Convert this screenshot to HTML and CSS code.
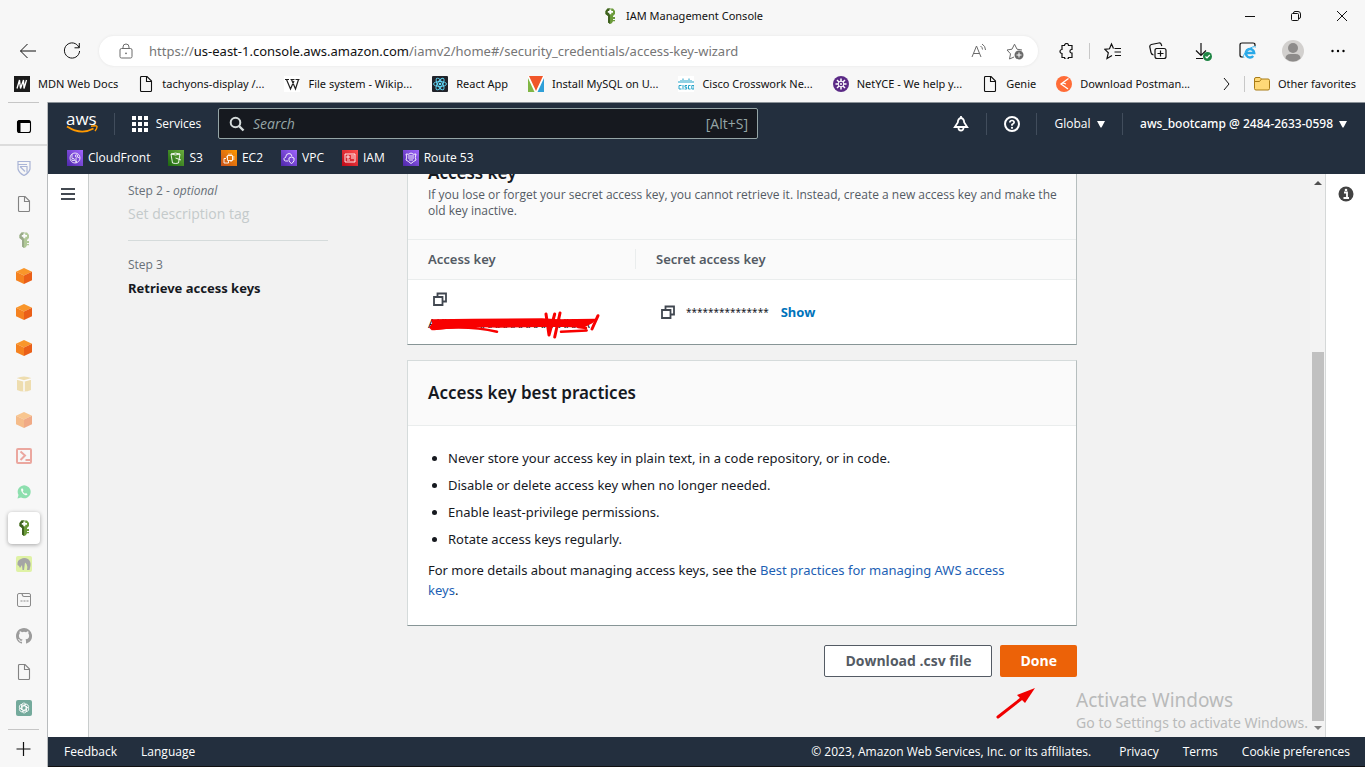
FILE: index.html
```html
<!DOCTYPE html>
<html lang="en">
<head>
<meta charset="utf-8">
<title>IAM Management Console</title>
<link rel="stylesheet" href="styles.css">
</head>
<body>
<svg class="defs" aria-hidden="true">
  <defs>
    <linearGradient id="purple" x1="0" y1="1" x2="1" y2="0"><stop offset="0" stop-color="#4d27a8"/><stop offset="1" stop-color="#a166ff"/></linearGradient>
    <linearGradient id="green" x1="0" y1="1" x2="1" y2="0"><stop offset="0" stop-color="#1b660f"/><stop offset="1" stop-color="#6cae3e"/></linearGradient>
    <linearGradient id="orange" x1="0" y1="1" x2="1" y2="0"><stop offset="0" stop-color="#c8511b"/><stop offset="1" stop-color="#ff9900"/></linearGradient>
    <linearGradient id="red" x1="0" y1="1" x2="1" y2="0"><stop offset="0" stop-color="#bd0816"/><stop offset="1" stop-color="#ff5252"/></linearGradient>
    <symbol id="page" viewBox="0 0 16 16"><path d="M3.500.5h5.500l4.500 4.500v9.500q0 1-1 1h-9q-1 0-1-1v-13q0-1 1-1zM8.500.8v4.700h4.700" fill="none" stroke="currentColor" stroke-width="1.100"/></symbol>
    <symbol id="key" viewBox="0 0 16 16"><path d="M3.500 3l2-2.500h5.500l2 2.500v3l-2 2v1h2v2h-2v1h2v1.200h-2L10 15l-1.500 1L6 14.500V8L3.500 6z" fill="#6b9a3a"/><path d="M3.500 3l2-2.500H8V16l-2-1.500V8L3.500 6z" fill="#3f611f"/><path d="M7.300 1.500h2V3H11v1.800H9.300V6.300h-2V4.800H5.800V3h1.500z" fill="#fff"/></symbol>
    <symbol id="cube" viewBox="0 0 16 16"><path d="M8 0l8 3.700L8 7.500 0 3.700z" fill="#f9962a"/><path d="M0 3.700l8 3.800V16l-8-3.800z" fill="#f58220"/><path d="M16 3.700L8 7.500V16l8-3.800z" fill="#ea5f18"/></symbol>
    <symbol id="copy" viewBox="0 0 16 16"><path d="M2 6h8.500v8H2zM5.500 6V2.500H14V10.500h-3.500" fill="none" stroke="#414750" stroke-width="1.800"/></symbol>
    <symbol id="caret" viewBox="0 0 8 8"><path d="M0 1h8L4.500 7.500h-1z" fill="currentColor"/></symbol>
  </defs>
</svg>

<header class="titlebar">
  <div class="window-title"><svg class="i16"><use href="#key"/></svg><span>IAM Management Console</span></div>
  <div class="window-controls">
    <button aria-label="Minimize"><svg class="i12" viewBox="0 0 12 12"><path d="M1 6.500h10" class="line"/></svg></button>
    <button aria-label="Restore"><svg class="i12" viewBox="0 0 12 12"><path d="M2.500 3.500h5q1 0 1 1v5q0 1-1 1h-5q-1 0-1-1v-5q0-1 1-1zM3.500 3q0-1.500 1.500-1.500h3q2.500 0 2.500 2.500v3q0 1.500-1.500 1.500" class="line"/></svg></button>
    <button aria-label="Close"><svg class="i12" viewBox="0 0 12 12"><path d="M1 1l10 10M11 1L1 11" class="line"/></svg></button>
  </div>
</header>

<div class="toolbar">
  <button class="tool nav-tool" aria-label="Back"><svg class="i18" viewBox="0 0 18 18"><path d="M17 9H1.500M8.500 2l-7 7 7 7" class="line"/></svg></button>
  <button class="tool nav-tool" aria-label="Refresh"><svg class="i18" viewBox="0 0 18 18"><path d="M16 5.500A7.600 7.600 0 1 0 16.600 9M16.300 1v4.800h-4.800" class="line"/></svg></button>
  <div class="address">
    <svg class="i16 muted" viewBox="0 0 16 16"><path d="M3.500 5.500h9q1.500 0 1.500 1.500v6.500q0 1.500-1.500 1.500h-9Q2 15 2 13.500V7q0-1.500 1.500-1.500zM5 5.500V4a3 3 0 0 1 6 0v1.500" class="line"/><circle cx="8" cy="10.300" r=".9" fill="currentColor"/></svg>
    <div class="url" role="textbox" aria-label="Address">https://<b>us-east-1.console.aws.amazon.com</b>/iamv2/home#/security_credentials/access-key-wizard</div>
    <button aria-label="Read aloud"><svg class="i16 muted" viewBox="0 0 16 16"><path d="M1 14L5.500 3 10 14M2.600 10.500h5.800M9.500 3q2 1.300 2 3.500M11 1q3.500 2 3.500 6" class="line"/></svg></button>
    <button aria-label="Add to favorites"><svg class="i18 muted" viewBox="0 0 18 18"><path d="M8 15l-4.500 2 1-5.200L1 8l5-.8 2.500-5L11 7.200l5 .8" class="line"/><circle cx="13" cy="13" r="4.500" fill="currentColor"/><path d="M13 10.500v5M10.500 13h5" stroke="#fff"/></svg></button>
  </div>
  <div class="tools">
    <button class="tool" aria-label="Extensions"><svg class="i16" viewBox="0 0 16 16"><path d="M3 2.500h2.500a2 2 0 0 1 4 0H13v4h-.7a1.800 1.800 0 0 0 0 3.500H13v4.500H9.500a2 2 0 0 1-4 0H3V10.500a2 2 0 0 1 0-4z" class="line heavy"/></svg></button>
    <span class="tool-rule"></span>
    <button class="tool" aria-label="Favorites"><svg class="i18" viewBox="0 0 18 18"><path d="M9.500 6.500L7.500 2 5.500 6.800.8 7.300l3.500 3.500L3 16.500l5-3M10.500 6.500H17M10.500 10H17M11 13.500h6" class="line heavy"/></svg></button>
    <button class="tool" aria-label="Collections"><svg class="i18" viewBox="0 0 18 18"><path d="M7 6.500h8q2 0 2 2v6q0 2-2 2H8q-2 0-2-2v-6q0-2 2-2M11.500 8.500v6M8.500 11.500h6M4.500 13Q2.500 12.500 2 10.500L.8 5q-.3-2 1.500-2.500l7.500-1.500q2-.3 2.500 1.500l.5 1.500" class="line heavy"/></svg></button>
    <button class="tool" aria-label="Downloads"><svg class="i20" viewBox="0 0 20 20"><path d="M8 2v12M3 9.500L8 14.500l5-5M3 17.500h7" class="line heavy"/><circle cx="14.500" cy="15.500" r="4.500" fill="#1e8544"/><path d="M12.500 15.500l1.500 1.500 2.800-3" fill="none" stroke="#fff" stroke-width="1.200"/></svg></button>
    <button class="tool" aria-label="Internet Explorer mode"><svg class="i18" viewBox="0 0 18 18"><path d="M16 4V3q0-2-2-2H3Q1 1 1 3v10q0 2 2 2h1" class="line heavy"/><path d="M6.500 11h8.700a4.200 4.200 0 1 0-1 3" fill="none" stroke="#29a9e8" stroke-width="2.500"/><path d="M5 16q-2-2 3-7.500 6-5 9-3.500" fill="none" stroke="#3bb4ee" stroke-width="1"/></svg></button>
    <button class="tool" aria-label="Profile"><svg class="i22" viewBox="0 0 22 22"><circle cx="11" cy="11" r="11" fill="#d2d0ce"/><circle cx="11" cy="8" r="5" fill="#8d8b8a"/><path d="M3.500 18.500q0-4.500 5-4.500h5q5 0 5 4.500a11 11 0 0 1-15 0z" fill="#8d8b8a"/></svg></button>
    <button class="tool" aria-label="Settings and more"><svg class="i16" viewBox="0 0 16 16"><circle cx="2.500" cy="8" r="1.200"/><circle cx="8" cy="8" r="1.200"/><circle cx="13.500" cy="8" r="1.200"/></svg></button>
  </div>
</div>

<nav class="bookmarks" aria-label="Favorites">
  <a href="#"><svg class="i16" viewBox="0 0 16 16"><path d="M0 0h16v16H0z" fill="#1b1b1b"/><path d="M3 12.500L5.500 4l1 8.500L9.500 4l.5 8.500L12.500 4" fill="none" stroke="#fff" stroke-width="1.300"/></svg>MDN Web Docs</a>
  <a href="#"><svg class="i16"><use href="#page"/></svg>tachyons-display /...</a>
  <a href="#"><svg class="i16" viewBox="0 0 16 16"><path d="M0 0h16v16H0z" fill="#fff"/><path d="M1 3.500h4M6.500 3.500h4M11.500 3.500h4M2.500 3.500l4 9.500L10 5M7.500 3.500l4 9.500 3-9.500" fill="none" stroke="#222" stroke-width="1.200"/></svg>File system - Wikip...</a>
  <a href="#"><svg class="i16" viewBox="0 0 16 16"><rect width="16" height="16" rx="1" fill="#20232a"/><g fill="none" stroke="#61dafb" stroke-width=".9"><ellipse cx="8" cy="8" rx="6.500" ry="2.500"/><ellipse cx="8" cy="8" rx="6.500" ry="2.500" transform="rotate(60 8 8)"/><ellipse cx="8" cy="8" rx="6.500" ry="2.500" transform="rotate(120 8 8)"/></g><circle cx="8" cy="8" r="1.300" fill="#61dafb"/></svg>React App</a>
  <a href="#"><svg class="i16" viewBox="0 0 16 16"><path d="M0 0h16v16H0z" fill="#fff"/><path d="M1 0h14L8 15z" fill="#f1562a"/><path d="M0 2l6.500 14H0z" fill="#80b644"/><path d="M16 2L9.500 16H16z" fill="#2f9fd8"/></svg>Install MySQL on U...</a>
  <a href="#"><svg class="i16" viewBox="0 0 16 16"><path d="M0 0h16v16H0z" fill="#fff"/><path d="M1 5v2M3 4v3M5 2.500V7M7 4v3M9 4v3M11 2.500V7M13 4v3M15 5v2M3.500 9.500H1v3.500h2.500M5 9v4.500M9 9.500H7v1.700h1.700V13H6.500M12.500 9.500h-2V13h2M13.800 9.500H16V13h-2.200z" fill="none" stroke="#25a3c8"/></svg>Cisco Crosswork Ne...</a>
  <a href="#"><svg class="i16" viewBox="0 0 16 16"><circle cx="8" cy="8" r="8" fill="#5b2a86"/><path d="M8 2.500v11M2.500 8h11M4 4l8 8M12 4l-8 8" stroke="#fff" stroke-width="1.500"/><circle cx="8" cy="8" r="2.800" fill="#5b2a86" stroke="#fff"/><circle cx="8" cy="8" r="1" fill="#fff"/></svg>NetYCE - We help y...</a>
  <a href="#"><svg class="i16"><use href="#page"/></svg>Genie</a>
  <a href="#"><svg class="i16" viewBox="0 0 16 16"><circle cx="8" cy="8" r="8" fill="#ff6c37"/><path d="M12.500 2.500L5 8l7 5M5 8l2-1 3 1" fill="none" stroke="#fff" stroke-width="1.300"/></svg>Download Postman...</a>
  <div class="bookmarks-end">
    <button aria-label="More favorites"><svg class="i12" viewBox="0 0 12 12"><path d="M4 0l5 6-5 6" class="line"/></svg></button>
    <a href="#"><svg class="i16" viewBox="0 0 16 16"><path d="M.5 4V3q0-1.500 1.500-1.500h4L7.500 3H14q1.500 0 1.500 1.500v8q0 1.500-1.500 1.500H2Q.5 14 .5 12.500z" fill="#ffd977" stroke="#a97c17"/><path d="M.5 5.500h5L7.500 3" fill="none" stroke="#a97c17"/></svg>Other favorites</a>
  </div>
</nav>

<div class="workspace">
  <aside class="tabs" aria-label="Browser tabs">
    <button class="tab-menu" aria-label="Tab actions menu"><svg class="i16" viewBox="0 0 16 16"><rect x="1.500" y="2.500" width="13" height="12" rx="2" fill="none" stroke="#000" stroke-width="1.100"/><path d="M2 2.500h12V5H2zM1.500 3h3v11.500H3L1.500 13z"/></svg></button>
    <div class="tab-list">
      <button class="dim" aria-label="Shield"><svg class="i16" viewBox="0 0 16 16"><path d="M2 1.500h12V9q-1 4-6 6.500Q3 13 2 9zM2 4.500h9M4 6.500h7v6M4 6.500l5 5" fill="none" stroke="#5f75b8" stroke-width="1.200"/></svg></button>
      <button class="dim" aria-label="Document"><svg class="i16"><use href="#page"/></svg></button>
      <button class="dim" aria-label="IAM"><svg class="i16"><use href="#key"/></svg></button>
      <button aria-label="AWS console"><svg class="i16"><use href="#cube"/></svg></button>
      <button aria-label="AWS console"><svg class="i16"><use href="#cube"/></svg></button>
      <button aria-label="AWS console"><svg class="i16"><use href="#cube"/></svg></button>
      <button class="dim" aria-label="Package"><svg class="i16" viewBox="0 0 16 16"><path d="M1 2q7-3 14 0v12q-7 3-14 0z" fill="#e6c46a"/><path d="M1 3l7 2 7-2M8 5v10.500" fill="none" stroke="#fff" stroke-width="1.500"/></svg></button>
      <button class="dim" aria-label="AWS console"><svg class="i16"><use href="#cube"/></svg></button>
      <button class="dim" aria-label="Terminal"><svg class="i16" viewBox="0 0 16 16"><rect x="1" y="1" width="14" height="14" rx="1" fill="none" stroke="#e0594a" stroke-width="2"/><path d="M4.500 3.500L9 7.500 4.500 12M9.500 12H14" fill="none" stroke="#e0594a" stroke-width="2"/></svg></button>
      <button class="dim" aria-label="WhatsApp"><svg class="i16" viewBox="0 0 16 16"><path d="M1.500 14.500l1-3.500a6.500 6.500 0 1 1 2.500 2.500z" fill="#25c867"/><path d="M5.500 4.500q-1 1 0 3 1.500 3 4 3.700 1.500.3 2-1L10 9l-1 .8Q7.500 9 6.700 7.200l.8-.9L6.700 4.500z" fill="#fff"/></svg></button>
      <button class="current" aria-label="IAM Management Console"><svg class="i16"><use href="#key"/></svg></button>
      <button class="dim" aria-label="Elephant"><svg class="i16" viewBox="0 0 16 16"><rect width="16" height="16" rx="2" fill="#c8ee56"/><path d="M1.500 9Q1 4 5 3q3-2 7 0 3 2 2.500 6.500L13.500 14h-2.500q1-3-.5-6L9 6.500 8 14H6.500L6 9l-2 3-1-2z" fill="#555"/></svg></button>
      <button class="dim" aria-label="Web app"><svg class="i16" viewBox="0 0 16 16"><rect x="1.500" y="1.500" width="13" height="13" rx="1.500" fill="none" stroke="#222"/><path d="M6 1.500q.5 3 2 3h6.500M4.500 9h2M7.500 9h2M10.500 9h2" fill="none" stroke="#222" stroke-width="1.200"/></svg></button>
      <button class="dim" aria-label="GitHub"><svg class="i16" viewBox="0 0 16 16"><path fill="#444" d="M8 0C3.580 0 0 3.580 0 8c0 3.540 2.290 6.530 5.470 7.590.4.070.55-.17.55-.38v-1.490c-2.010.37-2.530-.49-2.690-.94-.09-.23-.48-.94-.82-1.130-.28-.15-.68-.52-.01-.53.63-.01 1.080.58 1.230.82.72 1.210 1.870.87 2.330.66.07-.52.28-.87.51-1.070-1.780-.2-3.640-.89-3.640-3.950 0-.87.31-1.590.82-2.150-.08-.2-.36-1.020.08-2.120 0 0 .67-.21 2.200.82a7.600 7.600 0 0 1 4 0c1.530-1.040 2.200-.82 2.200-.82.44 1.100.16 1.920.08 2.120.51.56.82 1.270.82 2.150 0 3.070-1.870 3.750-3.650 3.950.29.25.54.73.54 1.480v2.200c0 .21.150.46.550.38A8 8 0 0 0 8 0z"/></svg></button>
      <button class="dim" aria-label="Document"><svg class="i16"><use href="#page"/></svg></button>
      <button aria-label="Chat"><svg class="i16" viewBox="0 0 16 16"><rect width="16" height="16" rx="2" fill="#74aa9c"/><g fill="none" stroke="#fff" stroke-width=".8"><path id="petal" d="M5.500 10V5.500a2.400 2.400 0 0 1 4.600-1L6.500 6.700"/><use href="#petal" transform="rotate(60 8 8)"/><use href="#petal" transform="rotate(120 8 8)"/><use href="#petal" transform="rotate(180 8 8)"/><use href="#petal" transform="rotate(240 8 8)"/><use href="#petal" transform="rotate(300 8 8)"/></g></svg></button>
    </div>
    <button class="new-tab" aria-label="New tab"><svg class="i16" viewBox="0 0 16 16"><path d="M7.500 2v14M.5 9h14" class="line heavy"/></svg></button>
  </aside>

  <div class="console">
    <header class="aws-header">
      <div class="aws-bar">
        <a class="aws-logo" href="#" aria-label="AWS"><span>aws</span><svg viewBox="0 0 32 9"><path d="M1 1.500q14 9 26.500 2" fill="none" stroke="#f90" stroke-width="1.800"/><path d="M25 1.200q5.500-1 6 .2.300 1.800-2 4.600" fill="none" stroke="#f90" stroke-width="1.400"/></svg></a>
        <button class="services"><svg class="i16" viewBox="0 0 16 16" fill="#fff"><path d="M0 0h4v4H0zM6 0h4v4H6zM12 0h4v4h-4zM0 6h4v4H0zM6 6h4v4H6zM12 6h4v4h-4zM0 12h4v4H0zM6 12h4v4H6zM12 12h4v4h-4z"/></svg>Services</button>
        <label class="search"><svg class="i16" viewBox="0 0 16 16"><circle cx="6.500" cy="6.500" r="4.800" fill="none" stroke="#d5dbdb" stroke-width="2"/><path d="M10 10l4.500 4.500" stroke="#d5dbdb" stroke-width="2.400"/></svg><input type="search" placeholder="Search" aria-label="Search"><span>[Alt+S]</span></label>
        <div class="aws-account">
          <button class="square" aria-label="Notifications"><svg class="i16" viewBox="0 0 16 16"><path d="M8 2Q5 2.500 4.800 6.500L1.800 11h12.400L11.200 6.500Q11 2.500 8 2zM8 0v2" fill="none" stroke="#fff" stroke-width="1.800"/><path d="M5.500 12a2.500 2.500 0 0 0 5 0" fill="none" stroke="#fff" stroke-width="1.800"/></svg></button>
          <button class="square" aria-label="Help"><svg class="i16" viewBox="0 0 16 16"><circle cx="8" cy="8" r="7" fill="none" stroke="#fff" stroke-width="2"/><path d="M5.800 6.500Q6 4.500 8 4.500t2.200 1.800Q10.200 7.500 8 8.500v1.200" fill="none" stroke="#fff" stroke-width="1.700"/><circle cx="8" cy="11.800" r="1.100" fill="#fff"/></svg></button>
          <button class="region">Global<svg class="i8"><use href="#caret"/></svg></button>
          <button class="user">aws_bootcamp @ 2484-2633-0598<svg class="i8"><use href="#caret"/></svg></button>
        </div>
      </div>
      <nav class="shortcuts" aria-label="Service favorites">
        <a href="#"><svg class="i16" viewBox="0 0 16 16"><path d="M0 0h16v16H0z" fill="url(#purple)"/><g fill="none" stroke="#fff" stroke-width=".8"><circle cx="8" cy="8" r="5"/><circle cx="6" cy="9.500" r="1.200"/><circle cx="9.500" cy="6" r="1.200"/><path d="M5 4v4M9 13V8M7 10l3 2M10.500 7l2 1"/></g></svg>CloudFront</a>
        <a href="#"><svg class="i16" viewBox="0 0 16 16"><path d="M0 0h16v16H0z" fill="url(#green)"/><path d="M3 4l1.500 9q3.500 1 6 0L12 4M3 4q4.500-1.800 9 0-4.500 2-9 0M7.500 8l5.500 2" fill="none" stroke="#fff" stroke-width=".9"/></svg>S3</a>
        <a href="#"><svg class="i16" viewBox="0 0 16 16"><path d="M0 0h16v16H0z" fill="url(#orange)"/><path d="M6.500 5.500h5v5h-5zM5 8.500H3V13h4.500v-2M8 3.500v2M10 3.500v2M11.500 7h2M11.500 9h2M10 10.500v1.500M5 7h1.500" fill="none" stroke="#fff" stroke-width=".9"/></svg>EC2</a>
        <a href="#"><svg class="i16" viewBox="0 0 16 16"><path d="M0 0h16v16H0z" fill="url(#purple)"/><path d="M7 11H4.500Q2.500 10.500 3 8.500q.5-1 1.500-1 .5-4 3.500-4 2.500 0 3 2.800M8 8l2.500-1L13 8v2.500q-.5 2-2.500 3Q8 12 8 10.500z" fill="none" stroke="#fff" stroke-width=".9"/></svg>VPC</a>
        <a href="#"><svg class="i16" viewBox="0 0 16 16"><path d="M0 0h16v16H0z" fill="url(#red)"/><path d="M3 4h10v8H3zM5 6h2v2H5zM5 10h3M9 6h3M9 8h3" fill="none" stroke="#fff" stroke-width=".9"/></svg>IAM</a>
        <a href="#"><svg class="i16" viewBox="0 0 16 16"><path d="M0 0h16v16H0z" fill="url(#purple)"/><path d="M3 4q2.500 1 5-1 2.500 2 5 1-1.500 3.500 0 6-2 1-5 3.500Q5 11 3 10q1.500-3 0-6zM5 6h6M5 8h6M6 10h4" fill="none" stroke="#fff" stroke-width=".9"/></svg>Route 53</a>
      </nav>
    </header>

    <div class="console-body">
      <div class="rail"><button aria-label="Open navigation"><svg class="i16" viewBox="0 0 16 16"><path d="M1 3h14M1 8h14M1 13h14" stroke="#444a52" stroke-width="2"/></svg></button></div>
      <main class="scroll">
        <div class="wizard">
          <ol class="steps">
            <li><small>Step 2 - <i>optional</i></small><span class="disabled">Set description tag</span></li>
            <li><small>Step 3</small><strong>Retrieve access keys</strong></li>
          </ol>
          <div class="panels">
            <section class="card">
              <header><h2>Access key</h2><p>If you lose or forget your secret access key, you cannot retrieve it. Instead, create a new access key and make the old key inactive.</p></header>
              <table>
                <thead><tr><th scope="col">Access key</th><th scope="col">Secret access key</th></tr></thead>
                <tbody><tr>
                  <td class="key-cell"><button class="copy" aria-label="Copy access key"><svg class="i16"><use href="#copy"/></svg></button><div class="redacted"><span>AKXXXXXXXXXXXXXXXXXXA</span><svg viewBox="0 0 174 30"><g fill="none" stroke="#f80000" stroke-linecap="round" stroke-linejoin="round"><path d="M4 11l41-.5L114 10l16 1 37-.5-3 3-9 4.500-24-1-60 1-30-1-37 3.500-2-2 3-4z" fill="#f80000" stroke-width="1.500"/><path d="M6 20Q40 16 69 22.700M133 22.700l25.700-1.200M150 18l8 1" stroke-width="2.500"/><path d="M118 5l3 21 5.700-21M132 4l-5.300 24M170 6.700L164 20" stroke-width="3"/></g></svg></div></td>
                  <td><div class="secret"><button class="copy" aria-label="Copy secret access key"><svg class="i16"><use href="#copy"/></svg></button><span>***************</span><button class="show">Show</button></div></td>
                </tr></tbody>
              </table>
            </section>
            <section class="card practices">
              <header><h2>Access key best practices</h2></header>
              <div class="card-body">
                <ul>
                  <li>Never store your access key in plain text, in a code repository, or in code.</li>
                  <li>Disable or delete access key when no longer needed.</li>
                  <li>Enable least-privilege permissions.</li>
                  <li>Rotate access keys regularly.</li>
                </ul>
                <p>For more details about managing access keys, see the <a href="#">Best practices for managing AWS access keys</a>.</p>
              </div>
            </section>
            <div class="actions">
              <button class="secondary">Download .csv file</button>
              <button class="primary">Done</button>
              <svg class="arrow" viewBox="0 0 40 32"><path d="M2 30L30 8" stroke="#f00000" stroke-width="3" stroke-linecap="round"/><path d="M39 1L21 8l8 8z" fill="#f00000"/></svg>
            </div>
          </div>
        </div>
        <div class="watermark"><strong>Activate Windows</strong><span>Go to Settings to activate Windows.</span></div>
      </main>
      <div class="scrollbar" aria-hidden="true"><svg class="i8" viewBox="0 0 8 8"><path d="M0 6l4-4 4 4z" fill="#505050"/></svg><span class="track"></span><span class="thumb"></span><svg class="i8" viewBox="0 0 8 8"><path d="M0 2l4 4 4-4z" fill="#808080"/></svg></div>
      <div class="rail info"><button aria-label="Info"><svg class="i16" viewBox="0 0 16 16"><circle cx="8" cy="8" r="7.500" fill="#434343"/><path d="M6 6.500h3V12M5.500 12h5.500" fill="none" stroke="#fff" stroke-width="1.800"/><circle cx="8" cy="4" r="1.300" fill="#fff"/></svg></button></div>
    </div>

    <footer class="aws-footer">
      <a href="#">Feedback</a><a href="#">Language</a>
      <span>© 2023, Amazon Web Services, Inc. or its affiliates.</span>
      <a href="#">Privacy</a><a href="#">Terms</a><a href="#">Cookie preferences</a>
    </footer>
  </div>
</div>
</body>
</html>
```
FILE: styles.css
```css
* { box-sizing: border-box; }
body {
  margin: 0; height: 100vh; overflow: hidden;
  display: flex; flex-direction: column;
  background: #f7f7f7; color: #111;
  font: 11px/16px "Noto Sans", "Open Sans", sans-serif;
}
button { border: 0; padding: 0; background: none; color: inherit; font: inherit; cursor: pointer; display: flex; align-items: center; justify-content: center; }
a { color: inherit; text-decoration: none; }
svg { flex: none; display: block; }
.defs { position: absolute; width: 0; height: 0; }
.i8 { width: 8px; height: 8px; }
.i12 { width: 12px; height: 12px; }
.i16 { width: 16px; height: 16px; }
.i18 { width: 18px; height: 18px; }
.i20 { width: 20px; height: 20px; }
.i22 { width: 22px; height: 22px; }
.line { fill: none; stroke: currentColor; stroke-width: 1; }
.heavy { stroke-width: 1.2; }
.muted { color: #6b6b6b; }

/* Browser window */
.titlebar { flex: none; height: 32px; display: grid; grid-template-columns: 1fr auto 1fr; }
.window-title { grid-column: 2; display: flex; align-items: center; gap: 8px; }
.window-controls { display: flex; justify-content: flex-end; }
.window-controls button { width: 46px; }
.toolbar { flex: none; height: 38px; display: flex; align-items: center; padding: 0 5px 0 6px; }
.tool { width: 45px; height: 30px; }
.nav-tool { width: 44px; }
.address { flex: 1; height: 30px; margin: 0 6px 0 5px; padding: 0 14px 0 19px; display: flex; align-items: center; gap: 19px; background: #fff; border-radius: 15px; box-shadow: 0 0 3px #e4e4e4; }
.url { flex: 1; margin-left: -4px; color: #767676; font-size: 13px; line-height: 20px; white-space: nowrap; overflow: hidden; }
.url b { color: #111; font-weight: 400; }
.tools { display: flex; align-items: center; }
.tool-rule { width: 1px; height: 16px; background: #c8c8c8; }
.bookmarks { flex: none; height: 32px; display: flex; align-items: center; gap: 20px; padding: 0 9px 4px 14px; white-space: nowrap; }
.bookmarks a { display: flex; align-items: center; gap: 8px; }
.bookmarks-end { margin-left: auto; display: flex; align-items: center; gap: 12px; }
.bookmarks-end a { border-left: 1px solid #c8c8c8; padding-left: 9px; }

/* Vertical tabs */
.workspace { flex: 1; min-height: 0; display: flex; }
.tabs { flex: none; width: 48px; display: flex; flex-direction: column; border-right: 1px solid #b9bcbe; }
.tab-menu { height: 44px; flex: none; position: relative; border-bottom: 2px solid #dcdcdc; padding-top: 6px; }
.tab-menu::before, .new-tab::before { content: ""; position: absolute; top: 0; left: 8px; right: 8px; height: 1px; background: #c6c6c6; }
.tab-list { flex: 1; padding-top: 6px; display: flex; flex-direction: column; gap: 4px; align-items: center; }
.tab-list button { width: 32px; height: 32px; border-radius: 4px; }
.tab-list .dim svg { opacity: .5; }
.tab-list .current { background: #fff; box-shadow: 0 1px 4px #0005; }
.new-tab { flex: none; height: 38px; position: relative; }

/* AWS header */
.console { flex: 1; min-width: 0; display: flex; flex-direction: column; color: #16191f; font-size: 13px; line-height: 20px; }
.aws-header { flex: none; background: #232f3e; color: #fff; font: 500 12px/20px "Open Sans", "Noto Sans", sans-serif; border-top: 1px solid #8b9298; }
.aws-bar { height: 41px; display: flex; align-items: center; }
.aws-logo { width: 67px; padding-left: 18px; border-right: 1px solid #414d5c; height: 22px; display: flex; flex-direction: column; justify-content: center; }
.aws-logo span { font-size: 17px; line-height: 12px; font-weight: 500; }
.aws-logo svg { width: 32px; height: 9px; }
.services { width: 103px; gap: 8px; }
.search { flex: 0 1 540px; height: 31px; display: flex; align-items: center; gap: 8px; padding: 0 9px 0 10px; background: #16191f; border: 1px solid #95a5a6; border-radius: 2px; color: #95a5a6; font-size: 14px; }
.search input { flex: 1; min-width: 0; border: 0; outline: 0; padding: 0; background: none; color: inherit; font: inherit; }
.search input::placeholder { color: #95a5a6; font-style: italic; opacity: 1; }
.aws-account { margin-left: auto; display: flex; align-items: center; }
.aws-account button { height: 22px; gap: 6px; }
.aws-account button + button { border-left: 1px solid #414d5c; }
.aws-account .square { width: 50px; }
.aws-account .region { width: 86px; }
.aws-account .user { padding: 0 18px 0 17px; white-space: nowrap; font-family: "Noto Sans", sans-serif; }
.shortcuts { height: 30px; padding-bottom: 2px; display: flex; align-items: center; gap: 18px; padding-left: 19px; }
.shortcuts a { display: flex; align-items: center; gap: 5px; }

/* Wizard */
.console-body { flex: 1; min-height: 0; display: flex; background: #f2f2f2; }
.rail { flex: none; width: 41px; background: #fff; border-right: 1px solid #c9cdcd; display: flex; justify-content: center; align-items: flex-start; padding-top: 12px; }
.rail.info { width: 40px; border: 0; border-left: 1px solid #d5d8d8; }
.scroll { flex: 1; min-width: 0; overflow: hidden; position: relative; display: flex; flex-direction: column; justify-content: flex-end; }
.wizard { flex: none; display: grid; grid-template-columns: 200px minmax(0, 670px); column-gap: 79px; padding: 0 20px 60px 39px; }
.steps { list-style: none; margin: 0; padding: 43px 0 0; }
.steps li { display: flex; flex-direction: column; gap: 5px; }
.steps li + li { border-top: 1px solid #d5dbdb; margin-top: 16px; padding-top: 16px; }
.steps small { font: 12px/16px "Open Sans", sans-serif; color: #687078; }
.steps .disabled { color: #c4cacb; font: 14px/20px "Open Sans", sans-serif; }
.steps strong { font-weight: 700; }
.panels { display: flex; flex-direction: column; }
.card { background: #fff; border: 1px solid #d5dbdb; border-bottom-color: #879596; border-right-color: #b6bebe; margin-bottom: 15px; }
.card > header { background: #fafafa; border-bottom: 1px solid #eaeded; padding: 20px 12px 20px 20px; }
.card h2 { margin: 0; font-size: 17px; line-height: 24px; font-weight: 600; }
.card header p { margin: 2px 0 0; font: 12px/16px "Open Sans", sans-serif; color: #545b64; }
.card table { width: 100%; border-collapse: collapse; table-layout: fixed; }
.card th { background: #fafafa; color: #545b64; text-align: left; font-weight: 600; height: 39px; padding: 0 20px; border-bottom: 1px solid #eaeded; }
.card th:first-child { width: 228px; background: linear-gradient(#eaeded, #eaeded) right center / 1px 20px no-repeat #fafafa; }
.card td { height: 65px; padding: 0 20px; }
.card .key-cell { padding-bottom: 4px; }
.copy { display: inline-flex; vertical-align: middle; width: 24px; height: 20px; }
.redacted { position: relative; margin-top: 4px; }
.redacted svg { position: absolute; left: 0; top: -4px; width: 174px; height: 30px; }
.secret { display: flex; align-items: center; gap: 6px; }
.secret span { font-size: 10px; }
.show { color: #0073bb; font-weight: 700; margin-left: 6px; }
.practices { margin-bottom: 19px; }
.card-body { padding: 22px 20px 25px; }
.card-body ul { margin: 0; padding-left: 20px; }
.card-body li { margin-bottom: 7px; }
.card-body p { margin: 11px 24px 0 0; }
.card-body a { color: #1d5fb4; }
.actions { display: flex; justify-content: flex-end; gap: 8px; position: relative; }
.actions button { height: 32px; padding: 0 20px; border-radius: 2px; font: 700 14px/20px "Open Sans", sans-serif; }
.actions .secondary { background: #fff; border: 1px solid #545b64; color: #545b64; }
.actions .primary { background: #ec6208; color: #fff; }
.arrow { position: absolute; right: 41px; top: 42px; width: 40px; height: 32px; }
.watermark { position: absolute; right: 2px; bottom: 4px; color: #b9baba; display: flex; flex-direction: column; white-space: nowrap; font-size: 14px; }
.watermark strong { font-size: 19px; line-height: 26px; font-weight: 400; }
.scrollbar { flex: none; width: 15px; display: flex; flex-direction: column; align-items: center; padding: 5px 0; gap: 3px; background: #f3f3f3; }
.track { flex: 159; }
.thumb { flex: 370; width: 12px; background: #c1c1c1; }

.aws-footer { flex: none; height: 30px; display: flex; align-items: center; gap: 24px; padding: 0 15px 0 16px; background: #232f3e; border-bottom: 1px solid #111; color: #fff; font: 12px/20px "Open Sans", "Noto Sans", sans-serif; white-space: nowrap; }
.aws-footer span { margin-left: auto; margin-right: 4px; }
```
